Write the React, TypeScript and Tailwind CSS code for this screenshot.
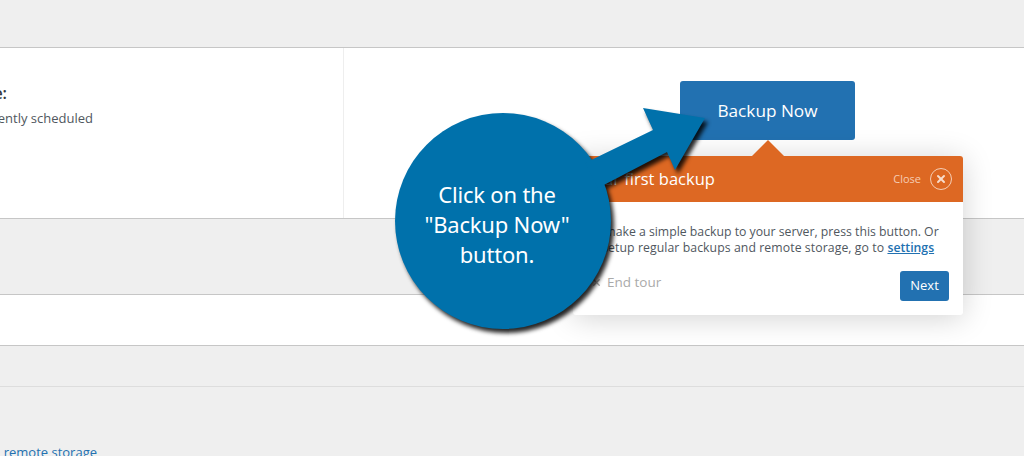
import { X } from "lucide-react"

const font = "font-['Open_Sans','Noto_Sans',sans-serif]"

function Callout() {
  return (
    <div className="absolute left-[380px] top-[90px] w-[340px] h-[250px]">
      <svg
        width="340"
        height="250"
        viewBox="380 90 340 250"
        className="absolute inset-0 drop-shadow-[3px_4px_2px_rgba(0,0,0,0.85)]"
      >
        <circle cx="503" cy="221" r="108" fill="#0071ab" />
        <path d="M585 163 L653 130 L643 108 L705 118 L675 170 L667 152 L598 188 Z" fill="#0071ab" />
      </svg>
      <div className="absolute left-[10px] top-[89px] w-[214px] text-center text-white text-[22px] leading-[30px] font-['Noto_Sans',sans-serif] tracking-[-0.2px]">
        Click on the
        <br />
        "Backup Now"
        <br />
        button.
      </div>
    </div>
  )
}

function Tour() {
  return (
    <div className="absolute left-[573px] top-[156px] w-[390px] h-[159px] bg-white rounded-[3px] shadow-[0_3px_30px_rgba(0,0,0,0.18)]">
      <div className="absolute left-[179px] top-[-16px] w-0 h-0 border-x-[16px] border-x-transparent border-b-[16px] border-b-[#dd6823]" />
      <div className="h-[46px] bg-[#dd6823] rounded-t-[3px] flex items-center justify-between pl-[11px] pr-[11px] text-white">
        <span className="text-[16.5px]">Your first backup</span>
        <div className="flex items-center gap-[9px]">
          <span className="text-[11px] text-[#f5cdb4]">Close</span>
          <span className="w-[22px] h-[22px] rounded-full border border-[#f5cdb4] flex items-center justify-center">
            <X size={12} strokeWidth={4} className="text-[#f7dccb]" />
          </span>
        </div>
      </div>
      <div className="pl-[14px] pr-[25px] pt-[22px] text-[12.25px] leading-[16px] text-[#50575e] whitespace-nowrap">
        To make a simple backup to your server, press this button. Or
        <br />
        <span className="tracking-[0.08px]">to setup regular backups and remote storage, go to </span>
        <a className="font-semibold text-[#2271b1] underline">settings</a>
      </div>
      <div className="flex items-start justify-between pl-[18px] pr-[14px] pt-[15px]">
        <span className="flex items-center gap-[5px] text-[13.5px] text-[#aaaaaa] pt-[1px]">
          <X size={11} strokeWidth={3} /> End tour
        </span>
        <button className="w-[49px] h-[30px] rounded-[3px] bg-[#2271b1] text-white text-[13px] font-medium">
          Next
        </button>
      </div>
    </div>
  )
}

export default function App() {
  return (
    <div className={`relative w-[1024px] h-[456px] overflow-hidden bg-[#efefef] flex flex-col ${font}`}>
      <div className="h-[47px] shrink-0" />
      <div className="h-[172px] shrink-0 flex bg-white border-y border-[#c6c6c6]">
        <div className="w-[344px] border-r border-[#eeeeee] overflow-hidden pt-[31px] whitespace-nowrap">
          <div className="w-[7px] flex justify-end text-[16px] font-semibold text-[#32373c] leading-[28px]">
            <span>Backup schedule:</span>
          </div>
          <div className="w-[93px] flex justify-end text-[13px] text-[#50575e] leading-[18px] mt-[2px]">
            <span>Nothing currently scheduled</span>
          </div>
        </div>
        <div className="flex-1 flex justify-end pr-[169px] pt-[33px]">
          <button className="w-[175px] h-[59px] pt-[1px] rounded-[3px] bg-[#2271b1] text-white text-[17.2px]">
            Backup Now
          </button>
        </div>
      </div>
      <div className="h-[75px] shrink-0" />
      <div className="h-[52px] shrink-0 bg-white border-y border-[#c6c6c6]" />
      <div className="h-[41px] shrink-0 border-b border-[#dddddd]" />
      <div className="pt-[56px] w-[97px] flex justify-end whitespace-nowrap text-[13px] leading-[18px] text-[#2271b1]">
        <span>Settings and remote storage</span>
      </div>
      <Tour />
      <Callout />
    </div>
  )
}
